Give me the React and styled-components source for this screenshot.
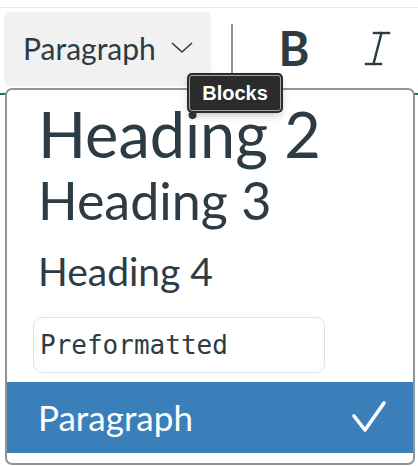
import React from 'react';
import styled, { createGlobalStyle } from 'styled-components';

const GlobalStyle = createGlobalStyle`
    html, body {
        margin: 0;
        padding: 0;
        background: #fff;
    }
    body {
        font-family: Lato, "Noto Sans", sans-serif;
        color: #2d3b45;
        width: 418px;
        height: 466px;
        overflow: hidden;
    }
`;

const Frame = styled.div`
    position: relative;
    width: 418px;
    height: 466px;
    padding-top: 7px;
    box-sizing: border-box;
`;

const TopRule = styled.div`
    height: 1px;
    background: #e9e9e9;
`;

const Toolbar = styled.div`
    display: flex;
    align-items: flex-start;
    margin-top: 4px;
    height: 74px;
`;

const BlockButton = styled.button`
    display: flex;
    align-items: center;
    gap: 14px;
    margin-left: 4px;
    width: 207px;
    height: 74px;
    padding: 0 0 2px 19px;
    border: none;
    border-radius: 6px;
    background: #f1f1f1;
    font-family: Lato, sans-serif;
    font-size: 30px;
    color: #2d3b45;
    box-sizing: border-box;
`;

const Divider = styled.div`
    width: 2px;
    height: 50px;
    margin: 12px 0 0 20px;
    background: #8e959d;
`;

const IconButton = styled.div`
    display: flex;
    align-items: center;
    justify-content: center;
    width: ${p => p.$w}px;
    height: 74px;
    margin-left: ${p => p.$ml}px;
`;

const BoldGlyph = styled.span`
    font-family: Lato, sans-serif;
    font-weight: 700;
    font-size: 47px;
    line-height: 1;
    color: #2d3b45;
    margin-top: -2px;
`;

const Editor = styled.div`
    margin-top: 7px;
    border-top: 2px solid #127a45;
`;

const Menu = styled.ul`
    position: absolute;
    top: 88px;
    left: 5px;
    width: 410px;
    height: 377px;
    margin: 0;
    padding: 0;
    list-style: none;
    background: #fff;
    border: 2px solid #8d959e;
    border-radius: 7px;
    box-sizing: border-box;
    overflow: hidden;
    display: flex;
    flex-direction: column;
`;

const Item = styled.li`
    font-family: Lato, sans-serif;
    font-size: ${p => p.$size}px;
    line-height: 1.2;
    padding-left: 31px;
    margin-top: ${p => p.$mt}px;
    color: #2d3b45;
`;

const PreBox = styled.div`
    margin: 22px 0 0 26px;
    width: 292px;
    height: 56px;
    box-sizing: border-box;
    border: 1px solid #e3e3e3;
    border-radius: 9px;
    display: flex;
    align-items: center;
    padding-left: 6px;
    font-family: "DejaVu Sans Mono", "Liberation Mono", monospace;
    font-size: 26px;
    color: #2d3b45;
`;

const SelectedItem = styled.li`
    display: flex;
    align-items: center;
    justify-content: space-between;
    margin-top: 9px;
    height: 71px;
    padding: 0 26px 0 31px;
    background: #3a7fb9;
    color: #fff;
    font-family: Lato, sans-serif;
    font-size: 35px;
`;

const Tooltip = styled.div`
    position: absolute;
    top: 75px;
    left: 189px;
    width: 92px;
    height: 36px;
    box-sizing: border-box;
    background: #2b2b2b;
    border: 1px solid #a3a3a3;
    box-shadow: 0 0 0 2px #2b2b2b, 0 4px 10px rgba(0, 0, 0, 0.25);
    border-radius: 3px;
    display: flex;
    align-items: center;
    justify-content: center;
    color: #fff;
    font-family: "Liberation Sans", Arial, sans-serif;
    font-weight: 700;
    font-size: 20px;
`;

const Chevron = () => (
    <svg width="24" height="14" viewBox="0 0 24 14">
        <polyline points="2,2 12,11 22,2" fill="none" stroke="#2d3b45" strokeWidth="1.6" />
    </svg>
);

const ItalicIcon = () => (
    <svg width="28" height="36" viewBox="0 0 28 36">
        <g stroke="#2d3b45" strokeWidth="2.4" fill="none" strokeLinecap="square">
            <line x1="10" y1="2" x2="25" y2="2" />
            <line x1="2" y1="33" x2="17" y2="33" />
            <line x1="17.5" y1="2" x2="9.5" y2="33" />
        </g>
    </svg>
);

const Check = () => (
    <svg width="36" height="34" viewBox="0 0 36 34">
        <polyline points="3,16 14,30 33,3" fill="none" stroke="#fff" strokeWidth="3.6" strokeLinecap="round" strokeLinejoin="round" />
    </svg>
);

export default function App() {
    return (
        <Frame>
            <GlobalStyle />
            <TopRule />
            <Toolbar>
                <BlockButton>
                    Paragraph
                    <Chevron />
                </BlockButton>
                <Divider />
                <IconButton $w={60} $ml={31}>
                    <BoldGlyph>B</BoldGlyph>
                </IconButton>
                <IconButton $w={60} $ml={24}>
                    <ItalicIcon />
                </IconButton>
            </Toolbar>
            <Editor />
            <Menu>
                <Item $size={63} $mt={6}>Heading 2</Item>
                <Item $size={52} $mt={-3}>Heading 3</Item>
                <Item $size={39} $mt={17}>Heading 4</Item>
                <li>
                    <PreBox>Preformatted</PreBox>
                </li>
                <SelectedItem>
                    Paragraph
                    <Check />
                </SelectedItem>
            </Menu>
            <Tooltip>Blocks</Tooltip>
        </Frame>
    );
}
